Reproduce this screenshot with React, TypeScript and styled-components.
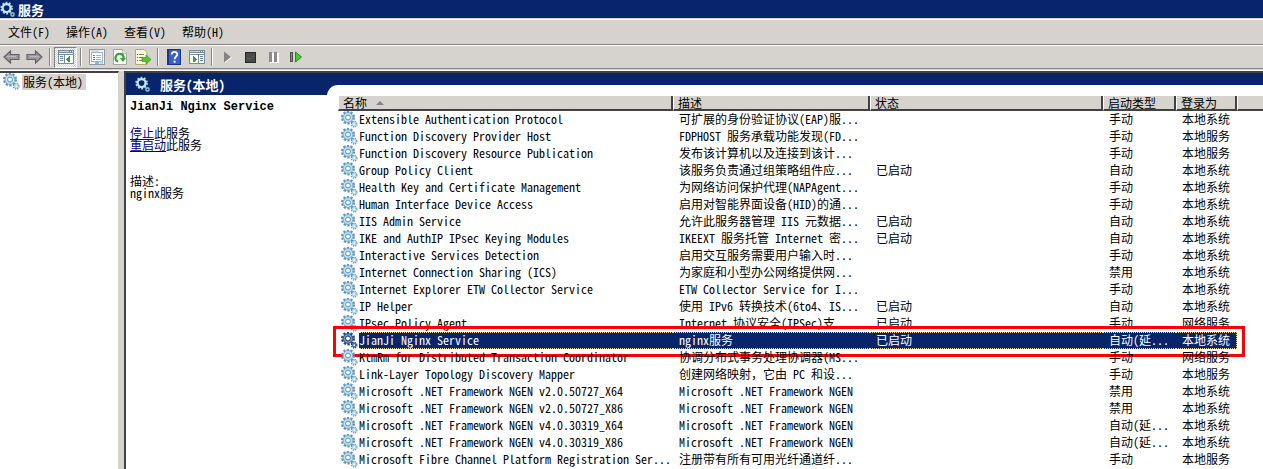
import React from "react";
import styled, { createGlobalStyle, css } from "styled-components";

const navy = "#08246b";
const face = "#d6d3ce";
const shadow = "#848284";
const dark = "#424142";

const GlobalStyle = createGlobalStyle`
  * { box-sizing: border-box; }
  body {
    margin: 0;
    background: ${face};
    color: #000;
    font-family: "Noto Sans CJK SC", "Liberation Mono", monospace;
    font-feature-settings: "hwid", "liga" 0;
    font-size: 12px;
    line-height: 17px;
  }
  button { font: inherit; font-feature-settings: inherit; color: inherit; border: 0; background: none; padding: 0; }
`;

const Window = styled.div`
  display: flex;
  flex-direction: column;
  height: 100vh;
  overflow: hidden;
`;

const TitleBar = styled.header`
  display: flex;
  align-items: center;
  gap: 2px;
  height: 18px;
  flex: none;
  background: ${navy};
  color: #fff;
  font-size: 13px;
  font-weight: 700;
`;

const MenuBar = styled.nav`
  display: flex;
  align-items: center;
  gap: 16px;
  height: 26px;
  flex: none;
  margin-top: 1px;
  padding: 0 0 2px 8px;
  border-top: 1px solid #fff;
  border-bottom: 1px solid ${shadow};
`;

const ToolBar = styled.div`
  display: flex;
  align-items: center;
  height: 24px;
  flex: none;
  border-top: 1px solid #fff;
  border-bottom: 1px solid ${shadow};
`;

const ToolButton = styled.button<{ $pressed?: boolean }>`
  display: flex;
  align-items: center;
  justify-content: center;
  width: 23px;
  height: 21px;
  border: 1px solid transparent;
  ${(p) =>
    p.$pressed &&
    css`
      border-color: ${shadow} #fff #fff ${shadow};
      background: repeating-conic-gradient(#fff 0 25%, ${face} 0 50%) 0 0 / 2px 2px;
    `}
`;

const Separator = styled.span`
  width: 2px;
  height: 18px;
  margin: 0 3px;
  border-left: 1px solid ${shadow};
  border-right: 1px solid #fff;
`;

const Workspace = styled.main`
  display: flex;
  flex: 1;
  gap: 5px;
  min-height: 0;
  margin-top: 1px;
  border-top: 1px solid #fff;
`;

const TreePane = styled.aside`
  width: 119px;
  flex: none;
  border-top: 2px solid ${dark};
  border-right: 1px solid ${face};
  background: #fff;
`;

const TreeItem = styled.button`
  display: flex;
  align-items: center;
  gap: 2px;
  padding-left: 3px;
  text-align: left;
`;

const TreeLabel = styled.span`
  height: 16px;
  line-height: 15px;
  padding: 0 3px 0 1px;
  background: ${face};
`;

const ResultPane = styled.section`
  display: flex;
  flex: 1;
  min-width: 0;
  border-top: 2px solid ${dark};
  border-left: 2px solid ${dark};
  background: ${navy};
`;

const Details = styled.div`
  display: flex;
  flex-direction: column;
  width: 201px;
  flex: none;
`;

const DetailsHeader = styled.h1`
  display: flex;
  align-items: center;
  gap: 9px;
  height: 22px;
  margin: 0;
  padding-left: 9px;
  color: #fff;
  font-size: 13px;
  font-weight: 700;
`;

const DetailsBody = styled.div`
  flex: 1;
  padding: 6px 4px;
  background: #fff;
  line-height: 12px;
`;

const ServiceName = styled.h2`
  margin: 0 0 14px;
  font-family: "Liberation Mono", monospace;
  font-size: 12px;
  line-height: 12px;
`;

const Paragraph = styled.p`
  margin: 0 0 24px;
`;

const TaskLink = styled.a`
  color: #000084;
`;

const ListPane = styled.div`
  flex: 1;
  min-width: 0;
  margin-top: 12px;
  padding: 11px 0 0 11px;
  border-top-left-radius: 11px;
  background: #fff;
`;

const ServiceTable = styled.table`
  width: 100%;
  table-layout: fixed;
  border-collapse: separate;
  border-spacing: 0;
`;

const Col = styled.col<{ $width?: number }>`
  width: ${(p) => (p.$width ? `${p.$width}px` : "auto")};
`;

const HeadCell = styled.th`
  height: 15px;
  padding: 0 0 0 4px;
  background: ${face};
  border-right: 2px solid ${dark};
  border-bottom: 2px solid ${dark};
  border-left: 1px solid #fff;
  font-weight: 400;
  line-height: 13px;
  text-align: left;
  white-space: nowrap;
  &:last-child { border-right: 0; }
`;

const SortArrow = styled.svg`
  margin: 0 0 3px 9px;
`;

const Row = styled.tr<{ $selected?: boolean }>`
  position: relative;
  ${(p) => p.$selected && css`color: #fff;`}
`;

const focusLine = css`
  border-top: 1px dotted #f7db94;
  border-bottom: 1px dotted #f7db94;
  background: ${navy};
`;

const Cell = styled.td<{ $selected?: boolean; $end?: boolean }>`
  height: 17px;
  padding: 0 0 2px 6px;
  line-height: 13px;
  white-space: nowrap;
  border: solid transparent;
  border-width: 1px 0;
  ${(p) => p.$selected && focusLine}
  ${(p) => p.$selected && p.$end && css`border-right: 1px dotted #f7db94;`}
`;

const NameCell = styled.td`
  height: 17px;
  padding: 0 0 0 3px;
`;

const NameContent = styled.div`
  display: flex;
  gap: 1px;
  height: 17px;
`;

const NameLabel = styled.span<{ $selected?: boolean }>`
  flex: 1;
  line-height: 13px;
  white-space: nowrap;
  border: solid transparent;
  border-width: 1px 0;
  ${(p) => p.$selected && focusLine}
`;

const FullWidth = styled.span`
  font-feature-settings: normal;
`;

const CalloutBox = styled.span`
  position: absolute;
  inset: -6px 18px -8px -5px;
  border: 3px solid #f00;
  pointer-events: none;
`;

const FillCell = styled.td`
  padding: 0;
`;

function GearIcon({ selected }: { selected?: boolean }) {
  const body = selected ? "#4a6da5" : "#a9d5ec";
  const rim = selected ? "#1f427f" : "#5b93bb";
  return (
    <svg width="17" height="17" viewBox="0 0 17 17" aria-hidden="true">
      <circle cx="7" cy="6.5" r="5.9" fill="none" stroke={rim} strokeWidth="2.200" strokeDasharray="2.200 1.507" />
      <circle cx="7" cy="6.5" r="5" fill={body} stroke={rim} strokeWidth=".8" strokeOpacity=".8" />
      <circle cx="7" cy="6.5" r="3.6" fill="none" stroke="#fff" strokeOpacity=".35" />
      <circle cx="7" cy="6.5" r="2.400" fill="#fff" stroke={rim} />
      <circle cx="13.2" cy="13.2" r="2.600" fill="none" stroke={rim} strokeWidth="1.600" strokeDasharray="1.200 .842" />
      <circle cx="13.2" cy="13.2" r="1.600" fill="#fff" stroke={body} strokeWidth="1.500" />
    </svg>
  );
}

function TitleGear() {
  return (
    <svg width="16" height="17" viewBox="0 0 17 17" aria-hidden="true">
      <circle cx="7" cy="7" r="5.8" fill="none" stroke="#b5dbef" strokeWidth="1.8" strokeDasharray="2 1.64" />
      <circle cx="7" cy="7" r="4.2" fill={navy} stroke="#c6e5f5" strokeWidth="2.400" />
      <circle cx="13.3" cy="13.8" r="1.7" fill={navy} stroke="#8cb6d6" strokeWidth="1.7" />
    </svg>
  );
}

const ArrowIcon = ({ flip }: { flip?: boolean }) => (
  <svg width="17" height="14" viewBox="0 0 17 14" aria-hidden="true">
    <path
      d={flip ? "M16 7 9.5 1v3.5H1v5h8.500V13z" : "M1 7l6.500-6v3.500H16v5H7.500V13z"}
      fill="#9c9a9c"
      stroke="#636163"
      strokeWidth="1.2"
    />
    <path d="M4 6.500h9" stroke="#bdbabd" />
  </svg>
);

const PanelIcon = ({ right }: { right?: boolean }) => (
  <svg width="16" height="14" viewBox="0 0 16 14" shapeRendering="crispEdges" aria-hidden="true">
    <path fill="#7b8ba0" d="M0 0h16v14H0z" />
    <path fill="#c6d3e7" d="M1 1h10v1H1z" />
    <path fill="#fff" d="M12 1h1v1h-1zM14 1h1v1h-1zM1 3h14v1H1z" />
    {right ? (
      <>
        <path fill="#fff" d="M1 5h8v8H1zM10 5h5v8h-5z" />
        <path fill="#6384ad" d="M11 6h3v1h-3zM11 8h3v1h-3zM11 10h3v1h-3z" />
        <path fill="#31a221" d="M4 6h1v1h1v1h1v1h1v1H7v1H6v1H4z" />
      </>
    ) : (
      <>
        <path fill="#fff" d="M1 5h5v8H1zM7 5h8v8H7z" />
        <path fill="#6384ad" d="M2 6h3v1H2zM2 8h3v1H2zM2 10h3v1H2z" />
        <path fill="#31a221" d="M12 6h-1v1h-1v1H9v1H8v1h1v1h1v1h2z" />
      </>
    )}
  </svg>
);

const PropertiesIcon = () => (
  <svg width="16" height="16" viewBox="0 0 16 16" aria-hidden="true">
    <rect x=".5" y=".5" width="15" height="15" fill="#f4f7fa" stroke="#8c9aad" />
    <rect x="2.500" y="3.500" width="11" height="9" fill="#fff" stroke="#a5b2c6" />
    <path d="M2 2h8" stroke="#b5c3d6" />
    <path d="M4 6.500h2M4 8.500h2M4 10.500h2" stroke="#3182c6" />
    <path d="M7 6.500h5M7 8.500h5M7 10.500h5" stroke="#9cb2ce" />
    <path d="M6 14h4" stroke="#31b6e7" strokeWidth="1.500" />
    <path d="M11 14h3" stroke="#9cb2ce" />
  </svg>
);

const RefreshIcon = () => (
  <svg width="14" height="16" viewBox="0 0 14 16" aria-hidden="true">
    <path d="M.5.5h9.500l3.500 3.500v11.500H.5z" fill="#fff" stroke="#a5a6a5" />
    <path d="M9.500.5v4h4" fill="#e7e7e7" stroke="#b5b6b5" />
    <path d="M5 12.500A4 4 0 1 1 10.500 9.500" fill="none" stroke="#31a629" strokeWidth="2.200" />
    <path d="M7 9h6l-3 4z" fill="#31a629" />
  </svg>
);

const ExportIcon = () => (
  <svg width="16" height="16" viewBox="0 0 16 16" aria-hidden="true">
    <path d="M.5.5H9l3 3v12H.5z" fill="#fffbe0" stroke="#b5a673" />
    <path d="M2 5.500h1M2 8.500h1M2 11.500h1" stroke="#635d42" />
    <path d="M4 5.500h5M4 8.500h4M4 11.500h4" stroke="#848263" />
    <path d="M7 8.500h4V6l5 4.500-5 4.500v-2.500H7z" fill="#5ac331" stroke="#319a18" strokeWidth=".7" />
  </svg>
);

const HelpIcon = () => (
  <svg width="14" height="16" viewBox="0 0 14 16" aria-hidden="true">
    <rect width="14" height="16" fill="#18348c" />
    <rect x="2" y="1" width="11" height="14" fill="#3a5fc4" />
    <path d="M4.700 5.500C4.700 2 10.300 2 10.300 5.300c0 2.200-2.700 2.200-2.700 4.900" fill="none" stroke="#fff" strokeWidth="1.800" />
    <rect x="6.600" y="11.700" width="2" height="2" fill="#fff" />
  </svg>
);

const PlayIcon = () => (
  <svg width="9" height="12" viewBox="0 0 9 12" aria-hidden="true">
    <path d="M2 1.500V12L9 6.500z" fill="#fff" />
    <path d="M1 .5v11L8 6z" fill="#848284" />
  </svg>
);

const StopIcon = () => (
  <svg width="11" height="11" viewBox="0 0 11 11" aria-hidden="true">
    <rect x=".5" y=".5" width="10" height="10" fill="#4a494a" stroke="#292829" />
    <path d="M2 7q4 1 7-3" stroke="#636163" fill="none" />
  </svg>
);

const PauseIcon = () => (
  <svg width="10" height="11" viewBox="0 0 10 11" shapeRendering="crispEdges" aria-hidden="true">
    <path d="M1 1h4v10H1zM6 1h4v10H6z" fill="#fff" />
    <path d="M0 0h3v10H0zM5 0h3v10H5z" fill="#8c8a8c" />
  </svg>
);

const RestartIcon = () => (
  <svg width="13" height="12" viewBox="0 0 13 12" aria-hidden="true">
    <rect x=".5" y="1.500" width="2" height="9" fill="#848284" stroke="#525152" />
    <path d="M5.500 1v10l6-5z" fill="#42cf31" stroke="#218a18" />
  </svg>
);

type Service = [name: string, description: React.ReactNode, status: string, startup: string, account: string];

const on = "已启动";
const manual = "手动";
const auto = "自动";
const disabled = "禁用";
const delayed = "自动(延...";
const system = "本地系统";
const local = "本地服务";
const network = "网络服务";

const services: Service[] = [
  ["Extensible Authentication Protocol", "可扩展的身份验证协议(EAP)服...", "", manual, system],
  ["Function Discovery Provider Host", "FDPHOST 服务承载功能发现(FD...", "", manual, local],
  ["Function Discovery Resource Publication", "发布该计算机以及连接到该计...", "", manual, local],
  ["Group Policy Client", "该服务负责通过组策略组件应...", on, auto, system],
  ["Health Key and Certificate Management", "为网络访问保护代理(NAPAgent...", "", manual, system],
  ["Human Interface Device Access", "启用对智能界面设备(HID)的通...", "", manual, system],
  ["IIS Admin Service", "允许此服务器管理 IIS 元数据...", on, auto, system],
  ["IKE and AuthIP IPsec Keying Modules", "IKEEXT 服务托管 Internet 密...", on, auto, system],
  ["Interactive Services Detection", "启用交互服务需要用户输入时...", "", manual, system],
  ["Internet Connection Sharing (ICS)", "为家庭和小型办公网络提供网...", "", disabled, system],
  ["Internet Explorer ETW Collector Service", "ETW Collector Service for I...", "", manual, system],
  ["IP Helper", <>使用 IPv6 转换技术(6to4<FullWidth>、</FullWidth>IS...</>, on, auto, system],
  ["IPsec Policy Agent", "Internet 协议安全(IPSec)支...", on, manual, network],
  ["JianJi Nginx Service", "nginx服务", on, delayed, system],
  ["KtmRm for Distributed Transaction Coordinator", "协调分布式事务处理协调器(MS...", "", manual, network],
  ["Link-Layer Topology Discovery Mapper", <>创建网络映射<FullWidth>，</FullWidth>它由 PC 和设...</>, "", manual, local],
  ["Microsoft .NET Framework NGEN v2.0.50727_X64", "Microsoft .NET Framework NGEN", "", disabled, system],
  ["Microsoft .NET Framework NGEN v2.0.50727_X86", "Microsoft .NET Framework NGEN", "", disabled, system],
  ["Microsoft .NET Framework NGEN v4.0.30319_X64", "Microsoft .NET Framework NGEN", "", delayed, system],
  ["Microsoft .NET Framework NGEN v4.0.30319_X86", "Microsoft .NET Framework NGEN", "", delayed, system],
  ["Microsoft Fibre Channel Platform Registration Ser...", "注册带有所有可用光纤通道纤...", "", manual, local],
];

const selectedName = "JianJi Nginx Service";

export default function App() {
  return (
    <>
      <GlobalStyle />
      <Window>
        <TitleBar>
          <TitleGear />
          <span>服务</span>
        </TitleBar>
        <MenuBar>
          {["文件(F)", "操作(A)", "查看(V)", "帮助(H)"].map((label) => (
            <button key={label}>{label}</button>
          ))}
        </MenuBar>
        <ToolBar role="toolbar">
          <ToolButton aria-label="后退"><ArrowIcon /></ToolButton>
          <ToolButton aria-label="前进"><ArrowIcon flip /></ToolButton>
          <Separator />
          <ToolButton aria-label="显示控制台树" $pressed><PanelIcon /></ToolButton>
          <Separator />
          <ToolButton aria-label="属性"><PropertiesIcon /></ToolButton>
          <ToolButton aria-label="刷新"><RefreshIcon /></ToolButton>
          <ToolButton aria-label="导出列表"><ExportIcon /></ToolButton>
          <Separator />
          <ToolButton aria-label="帮助"><HelpIcon /></ToolButton>
          <ToolButton aria-label="显示操作窗格"><PanelIcon right /></ToolButton>
          <Separator />
          <ToolButton aria-label="启动服务"><PlayIcon /></ToolButton>
          <ToolButton aria-label="停止服务"><StopIcon /></ToolButton>
          <ToolButton aria-label="暂停服务"><PauseIcon /></ToolButton>
          <ToolButton aria-label="重新启动服务"><RestartIcon /></ToolButton>
        </ToolBar>
        <Workspace>
          <TreePane>
            <TreeItem>
              <GearIcon />
              <TreeLabel>服务(本地)</TreeLabel>
            </TreeItem>
          </TreePane>
          <ResultPane>
            <Details>
              <DetailsHeader>
                <TitleGear />
                <span>服务(本地)</span>
              </DetailsHeader>
              <DetailsBody>
                <ServiceName>{selectedName}</ServiceName>
                <Paragraph>
                  <TaskLink href="#stop">停止</TaskLink>此服务
                  <br />
                  <TaskLink href="#restart">重启动</TaskLink>此服务
                </Paragraph>
                <Paragraph>
                  描述:
                  <br />
                  nginx服务
                </Paragraph>
              </DetailsBody>
            </Details>
            <ListPane>
              <ServiceTable>
                <colgroup>
                  <Col />
                  <Col $width={197} />
                  <Col $width={233} />
                  <Col $width={73} />
                  <Col $width={61} />
                  <Col $width={26} />
                </colgroup>
                <thead>
                  <tr>
                    <HeadCell>
                      名称
                      <SortArrow width="8" height="4" viewBox="0 0 8 4" aria-hidden="true">
                        <path d="M0 4 4 0l4 4z" fill={shadow} />
                      </SortArrow>
                    </HeadCell>
                    <HeadCell>描述</HeadCell>
                    <HeadCell>状态</HeadCell>
                    <HeadCell>启动类型</HeadCell>
                    <HeadCell>登录为</HeadCell>
                    <HeadCell />
                  </tr>
                </thead>
                <tbody>
                  {services.map(([name, description, status, startup, account]) => {
                    const selected = name === selectedName;
                    return (
                      <Row key={name} $selected={selected} aria-selected={selected}>
                        <NameCell>
                          <NameContent>
                            <GearIcon selected={selected} />
                            <NameLabel $selected={selected}>{name}</NameLabel>
                          </NameContent>
                          {selected && <CalloutBox />}
                        </NameCell>
                        <Cell $selected={selected}>{description}</Cell>
                        <Cell $selected={selected}>{status}</Cell>
                        <Cell $selected={selected}>{startup}</Cell>
                        <Cell $selected={selected} $end>{account}</Cell>
                        <FillCell />
                      </Row>
                    );
                  })}
                </tbody>
              </ServiceTable>
            </ListPane>
          </ResultPane>
        </Workspace>
      </Window>
    </>
  );
}
